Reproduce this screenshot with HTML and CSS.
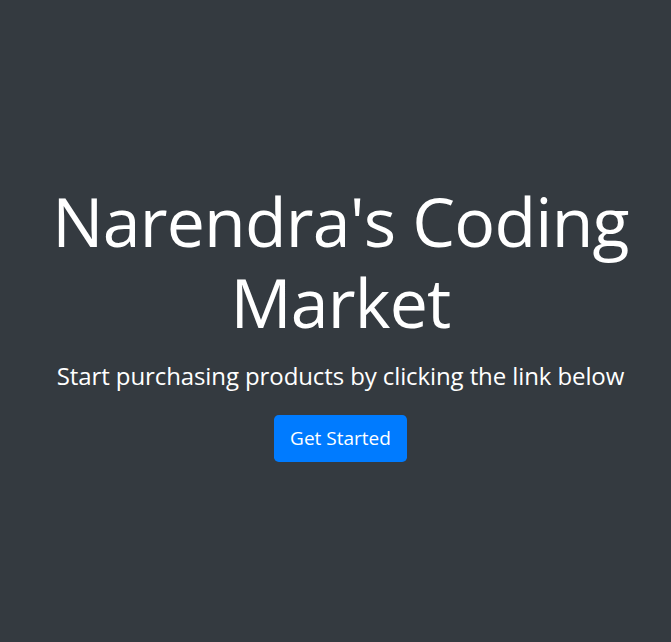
FILE: index.html
```html
<!DOCTYPE html>
<html lang="en">
<head>
<meta charset="utf-8">
<title>Narendra's Coding Market</title>
<link rel="stylesheet" href="styles.css">
</head>
<body>
<main class="hero">
  <h1 class="hero-title">Narendra's Coding Market</h1>
  <p class="hero-lead">Start purchasing products by clicking the link below</p>
  <a class="btn-start" href="#">Get Started</a>
</main>
</body>
</html>
```

FILE: styles.css
```css
html, body {
  margin: 0;
  padding: 0;
  height: 100%;
}
body {
  background: #343a40;
  color: #fff;
  font-family: "Open Sans", "Noto Sans", sans-serif;
}
.hero {
  min-height: 100vh;
  display: flex;
  flex-direction: column;
  align-items: center;
  justify-content: center;
  text-align: center;
  padding: 0 20px 0 30px;
  box-sizing: border-box;
}
.hero-title {
  margin: 0 0 15px;
  font-size: 68px;
  font-weight: 400;
  line-height: 1.2;
  letter-spacing: -0.8px;
}
.hero-lead {
  margin: 0 0 21px;
  font-size: 24px;
  line-height: 1.5;
  letter-spacing: -0.1px;
}
.btn-start {
  display: inline-block;
  background: #007bff;
  color: #fff;
  text-decoration: none;
  font-size: 19px;
  line-height: 1.5;
  padding: 9.5px 16px;
  border-radius: 4.8px;
}
```
